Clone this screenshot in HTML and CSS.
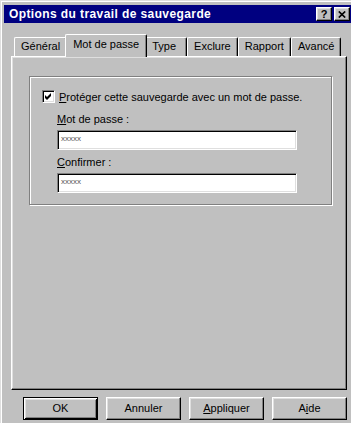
FILE: index.html
```html
<!DOCTYPE html>
<html lang="fr">
<head>
  <meta charset="UTF-8" />
  <title>Options du travail de sauvegarde</title>
  <link rel="stylesheet" href="styles.css">
</head>
<body>
  <div class="window">
    <div class="titlebar">
      <span class="title">Options du travail de sauvegarde</span>
      <div class="title-buttons">
        <span class="tbtn help">?</span>
        <span class="tbtn">
          <svg width="8" height="7" viewBox="0 0 8 7"><path d="M0.8 0.5 L7.2 6.5 M7.2 0.5 L0.8 6.5" stroke="#000" stroke-width="1.7" fill="none"/></svg>
        </span>
      </div>
    </div>
    <div class="dialog">
      <div class="tabs">
        <div class="tab">Général</div>
        <div class="tab active">Mot de passe</div>
        <div class="tab tab-type">Type</div>
        <div class="tab">Exclure</div>
        <div class="tab">Rapport</div>
        <div class="tab">Avancé</div>
      </div>
      <div class="panel">
        <div class="groupbox">
          <div class="check-row">
            <span class="checkbox">
              <svg width="9" height="9" viewBox="0 0 9 9"><polygon points="1,3 3,5 7,1 7,4 3,8 1,6" fill="#000"/></svg>
            </span>
            <span><u>P</u>rotéger cette sauvegarde avec un mot de passe.</span>
          </div>
          <div class="field">
            <div class="field-label"><u>M</u>ot de passe :</div>
            <div class="textbox">xxxxx</div>
          </div>
          <div class="field">
            <div class="field-label second"><u>C</u>onfirmer :</div>
            <div class="textbox">xxxxx</div>
          </div>
        </div>
      </div>
      <div class="buttons">
        <div class="btn default">OK</div>
        <div class="btn">Annuler</div>
        <div class="btn"><u>A</u>ppliquer</div>
        <div class="btn">A<u>i</u>de</div>
      </div>
    </div>
  </div>
</body>
</html>
```

FILE: styles.css
```css
body {
  margin: 0;
  width: 351px;
  height: 423px;
  overflow: hidden;
  background-color: #c0c0c0;
  font-family: "Liberation Sans", Arial, sans-serif;
  font-size: 11px;
  color: #000;
}
.window {
  width: 356px;
  height: 430px;
  box-sizing: border-box;
  border-top: 1px solid #dfdfdf;
  border-left: 1px solid #dfdfdf;
  box-shadow: inset 1px 1px 0 #fff;
  padding: 4px 4px 0 3px;
}
.titlebar {
  height: 18px;
  background-color: #000080;
  display: flex;
  align-items: center;
  justify-content: space-between;
  padding: 0 2px 0 5px;
}
.title {
  color: #fff;
  font-weight: bold;
  font-size: 12px;
  letter-spacing: 0.4px;
}
.title-buttons {
  display: flex;
  gap: 2px;
}
.tbtn {
  width: 16px;
  height: 14px;
  box-sizing: border-box;
  background-color: #c0c0c0;
  border: 1px solid;
  border-color: #fff #000 #000 #fff;
  box-shadow: inset -1px -1px 0 #808080, inset 1px 1px 0 #dfdfdf;
  display: flex;
  align-items: center;
  justify-content: center;
}
.help {
  font-weight: bold;
  font-size: 11px;
  line-height: 12px;
}
.dialog {
  padding: 0 5px 0 7px;
}
.tabs {
  height: 33px;
  box-sizing: border-box;
  display: flex;
  align-items: flex-end;
  padding-left: 3px;
}
.tab {
  height: 19px;
  box-sizing: border-box;
  padding: 0 6px;
  line-height: 17px;
  border: 1px solid;
  border-color: #fff #000 transparent #fff;
  border-bottom: none;
  border-radius: 2px 2px 0 0;
  box-shadow: inset -1px 0 0 #808080;
  background-color: #c0c0c0;
}
.tab-type {
  padding-right: 10px;
}
.tab.active {
  height: 23px;
  margin: 0 -2px -1px;
  padding: 0 7px;
  line-height: 18px;
  position: relative;
  z-index: 1;
}
.panel {
  height: 334px;
  box-sizing: border-box;
  border: 1px solid;
  border-color: #fff #000 #000 #fff;
  box-shadow: inset -1px -1px 0 #808080, inset 1px 1px 0 #dfdfdf;
  padding: 19px 14px 0 17px;
}
.groupbox {
  height: 129px;
  box-sizing: border-box;
  border: 1px solid #808080;
  box-shadow: 1px 1px 0 #fff, inset 1px 1px 0 #fff;
  padding: 13px 0 0 12px;
}
.check-row {
  display: flex;
  align-items: center;
  gap: 4px;
  height: 13px;
}
.checkbox {
  width: 13px;
  height: 13px;
  box-sizing: border-box;
  background-color: #fff;
  border: 1px solid;
  border-color: #808080 #fff #fff #808080;
  box-shadow: inset 1px 1px 0 #000, inset -1px -1px 0 #dfdfdf;
  display: flex;
  align-items: center;
  justify-content: center;
}
.field {
  margin-left: 15px;
}
.field-label {
  margin-top: 9px;
  line-height: 14px;
}
.field-label.second {
  margin-top: 5px;
}
.textbox {
  margin-top: 4px;
  width: 240px;
  height: 20px;
  box-sizing: border-box;
  background-color: #fff;
  border: 1px solid;
  border-color: #808080 #fff #fff #808080;
  box-shadow: inset 1px 1px 0 #000, inset -1px -1px 0 #dfdfdf;
  padding: 3px 0 0 3px;
  font-size: 8px;
  line-height: 9px;
  color: #555;
}
.buttons {
  display: flex;
  justify-content: flex-end;
  gap: 8px;
  margin-top: 7px;
}
.btn {
  width: 75px;
  height: 23px;
  box-sizing: border-box;
  border: 1px solid;
  border-color: #fff #000 #000 #fff;
  box-shadow: inset -1px -1px 0 #808080, inset 1px 1px 0 #dfdfdf;
  text-align: center;
  line-height: 21px;
}
.btn.default {
  border-color: #000;
  box-shadow: inset 1px 1px 0 #fff, inset -1px -1px 0 #000, inset 2px 2px 0 #dfdfdf, inset -2px -2px 0 #808080;
}
```
